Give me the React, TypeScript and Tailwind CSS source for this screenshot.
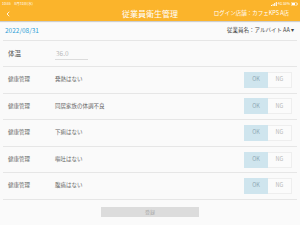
import { ChevronLeft } from "lucide-react";

const rows = ["発熱はない", "同居家族の体調不良", "下痢はない", "嘔吐はない", "腹痛はない"];

const font = { fontFamily: '"Noto Sans CJK JP", "Noto Sans", sans-serif' };

const StatusRight = () => (
  <div className="flex items-center gap-[1px] text-[3.5px] leading-none text-white">
    <svg width="6" height="4" viewBox="0 0 6 4">
      <rect x="0" y="3" width="1" height="1" fill="white" />
      <rect x="1.6" y="2" width="1" height="2" fill="white" />
      <rect x="3.2" y="1" width="1" height="3" fill="white" />
      <rect x="4.8" y="0" width="1" height="4" fill="white" />
    </svg>
    <span>4G 55%</span>
    <svg width="7" height="4" viewBox="0 0 7 4">
      <rect x="0.25" y="0.25" width="5.5" height="3.5" rx="0.6" fill="none" stroke="white" strokeWidth="0.5" />
      <rect x="1" y="1" width="3" height="2" fill="white" />
      <rect x="6" y="1.3" width="0.7" height="1.4" fill="white" />
    </svg>
  </div>
);

const OkNg = () => (
  <div className="flex h-[16px] w-[48px] text-[5.5px] leading-none">
    <div className="flex w-[24px] items-center justify-center bg-[#cfe5ee] text-[#8fa9b5]">OK</div>
    <div className="flex w-[24px] items-center justify-center border border-l-0 border-[#eeeeee] bg-[#fbfbfb] text-[#b5b5b5]">
      NG
    </div>
  </div>
);

export default function App() {
  return (
    <div className="flex h-[225px] w-[300px] flex-col overflow-hidden bg-[#fafafa]" style={font}>
      {/* header */}
      <div className="relative z-10 bg-[#fbb42b] shadow-[0_1px_1px_rgba(0,0,0,0.18)]">
        <div className="flex h-[7px] items-center justify-between px-[2px]">
          <span className="text-[3.5px] leading-none text-white">10:55　8月31日(水)</span>
          <StatusRight />
        </div>
        <div className="relative flex h-[14px] items-center px-[4px]">
          <ChevronLeft size={8} strokeWidth={2.5} className="text-white" />
          <span className="absolute left-1/2 top-1/2 -translate-x-1/2 -translate-y-1/2 text-[8px] leading-none text-white">
            従業員衛生管理
          </span>
          <span className="ml-auto pr-[7px] text-[5.5px] leading-none text-white">ログイン店舗：カフェKPS A店</span>
        </div>
      </div>

      <div className="mx-[3px] flex flex-col">
        {/* date row */}
        <div className="flex h-[20px] items-center justify-between border-b border-[#e6e6e6] px-[2px]">
          <span className="text-[6.5px] leading-none text-[#2d9fd7]">2022/08/31</span>
          <span className="pr-[1px] text-[5.5px] leading-none text-[#444]">従業員名：アルバイト AA ▾</span>
        </div>

        {/* temperature */}
        <div className="flex h-[26px] items-center border-b border-[#e6e6e6] pl-[5px]">
          <span className="w-[47px] text-[6.5px] leading-none text-[#555]">体温</span>
          <div className="flex h-[12px] w-[33px] items-center border-b border-[#dcdcdc] pt-[1px]">
            <span className="pl-[1px] text-[6.5px] leading-none text-[#bbbbbb]">36.0</span>
          </div>
        </div>

        {rows.map((r) => (
          <div key={r} className="flex h-[26.6px] items-center border-b border-[#e6e6e6] pl-[5px] pr-[5px]">
            <span className="w-[47px] text-[5.5px] leading-none text-[#666]">健康管理</span>
            <span className="text-[5.5px] leading-none text-[#666]">{r}</span>
            <div className="ml-auto">
              <OkNg />
            </div>
          </div>
        ))}

        <div className="flex justify-center pt-[7px]">
          <div className="flex h-[10px] w-[98px] items-center justify-center bg-[#dcdcdc] text-[5px] leading-none text-[#a8a8a8]">
            登録
          </div>
        </div>
      </div>
    </div>
  );
}
